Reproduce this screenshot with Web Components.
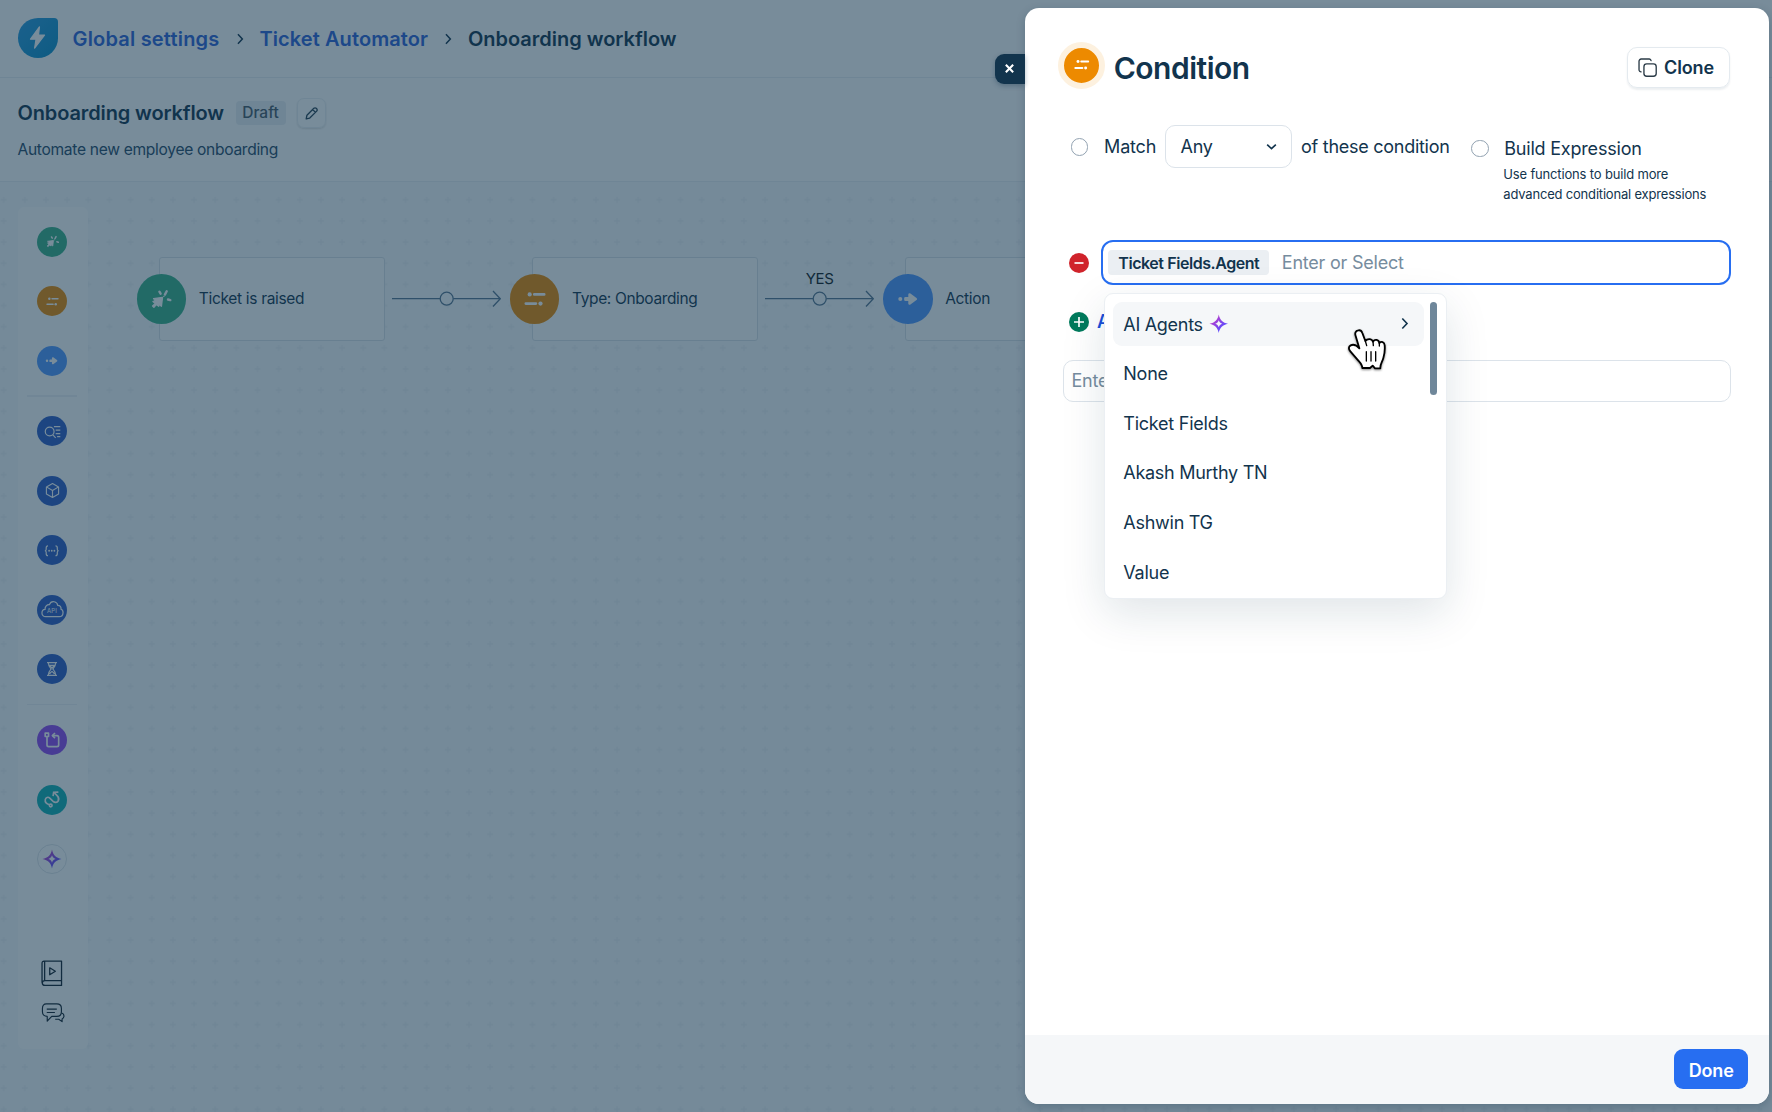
<!DOCTYPE html>
<html lang="en">
<head>
<meta charset="utf-8">
<title>Onboarding workflow</title>
<style>
html,body{margin:0;height:100%;overflow:hidden}
body{font-family:Inter,"Liberation Sans",sans-serif;color:#12344d;background:#fff}
</style>
</head>
<body>
<workflow-app></workflow-app>
<script>
const define=(name,html,setup)=>{
  const t=document.createElement('template');t.innerHTML=html;
  customElements.define(name,class extends HTMLElement{
    constructor(){super();this.attachShadow({mode:'open'}).append(t.content.cloneNode(true));}
    connectedCallback(){if(setup)setup.call(this,this.shadowRoot);}
  });
};
const spark='<path d="M12 .6C13.3 7.200 16.800 10.700 23.400 12C16.800 13.300 13.300 16.800 12 23.400C10.700 16.800 7.200 13.300 .6 12C7.200 10.700 10.700 7.200 12 .6Z M12 7.600C11.200 10 10 11.200 7.600 12C10 12.800 11.200 14 12 16.400C12.800 14 14 12.800 16.400 12C14 11.200 12.800 10 12 7.600Z" fill="url(#g)" fill-rule="evenodd"/>';
const ICONS={
 bolt:'<path fill="#fff" d="M13.6 3.2 6.2 13.4h4.6L9.6 20.8 17.8 10h-5z" stroke="#fff" stroke-width="1" stroke-linejoin="round"/>',
 right:'<path d="M8.5 4l7.500 8-7.500 8" fill="none" stroke="currentColor" stroke-width="2.600"/>',
 down:'<path d="M4 8.5l8 7.5 8-7.5" fill="none" stroke="currentColor" stroke-width="3"/>',
 pencil:'<path d="M3.5 20.5l1.2-5.7L15.8 3.7a2.6 2.6 0 0 1 3.7 0l.8.8a2.6 2.6 0 0 1 0 3.7L9.2 19.3z M14 5.8l4.2 4.2" fill="none" stroke="currentColor" stroke-width="2.1" stroke-linejoin="round"/>',
 burst:'<g stroke="#fff" stroke-linecap="round" stroke-linejoin="round"><path d="M4.6 11.6 13.5 10.4 12.4 19.2 9.9 16.9 9.7 19.2 7.3 17.5 4.9 20.2 3.6 19 6.3 16.4 4 14.4 6.7 14z" fill="#fff" stroke-width="1.4"/><path d="M10.4 4.7l1.2 2M17.7 4.2l-1.8 3.4M19 12.5l2.3.6" fill="none" stroke-width="2.4"/><path d="M12.6 11.4h.1M14.8 9.4h.1" stroke-width="1.4"/></g>',
 cond:'<g fill="none" stroke="#fff" stroke-width="3" stroke-linecap="round"><path d="M11.2 7H22M2 17h11"/></g><circle cx="6.2" cy="7" r="2.3" fill="#fff"/><circle cx="18" cy="17" r="2.3" fill="#fff"/>',
 action:'<circle cx="3.6" cy="12" r="2.2" fill="#fff"/><path d="M9.3 11.300h4.500V7.200L20.400 12l-6.600 4.800v-4.100H9.300z" fill="#fff" stroke="#fff" stroke-width="3" stroke-linejoin="round"/>',
 lookup:'<g fill="none" stroke="#fff" stroke-width="1.7"><circle cx="8" cy="12" r="6.2"/><path d="M12.5 16.7l4 4.3M14 5h9M16.5 10.1H23M16.5 15.1H23M18.5 19.2H23"/></g>',
 cube:'<path d="M12 2.1l8.6 4.8v10.2L12 21.9l-8.6-4.8V6.9zM3.4 6.9 12 12l8.6-5.1M12 12v9.9" fill="none" stroke="#fff" stroke-width="1.6" stroke-linejoin="round"/>',
 braces:'<path d="M6.2 4.5c-2.4 0-2.8 1-2.8 3V9.5c0 1.6-.6 2.3-2 2.5 1.4.2 2 .9 2 2.500v2c0 2 .4 3 2.800 3M17.800 4.500c2.400 0 2.800 1 2.800 3V9.500c0 1.600.6 2.300 2 2.500-1.400.2-2 .9-2 2.500v2c0 2-.4 3-2.800 3" fill="none" stroke="#fff" stroke-width="1.9"/><g fill="#fff"><circle cx="7.900" cy="12" r="1.400"/><circle cx="12" cy="12" r="1.400"/><circle cx="16.100" cy="12" r="1.400"/></g>',
 cloud:'<path d="M5 19.500C2.500 19.500 1 17.800 1 15.600c0-2 1.500-3.600 3.200-3.700-.2-3 2-5.200 4.600-5 .9-2.400 3-3.400 5-3 2 .4 3.400 1.900 3.700 3.800 2.200-.1 3.700 1.600 3.400 4 1.400.5 2.200 1.900 2.100 3.600-.1 2.400-1.700 4.200-4 4.200z" fill="none" stroke="#fff" stroke-width="1.300"/>',
 glass:'<path d="M4.500 2.500h15M4.500 21.500h15M6.500 2.700c0 5 1.500 6.300 4.200 9.300-2.700 3-4.200 4.300-4.200 9.300M17.500 2.700c0 5-1.500 6.300-4.200 9.300 2.700 3 4.200 4.300 4.200 9.300M8.300 6.500h7.400L12 10.500zM8.500 19.500c.5-2 2-2.700 3.500-3.700 1.500 1 3 1.700 3.500 3.700" fill="none" stroke="#fff" stroke-width="1.700"/>',
 loop:'<g fill="none" stroke="#fff" stroke-width="2.500" stroke-linejoin="round"><path d="M1.800 1.800h5v5h-5zM4.500 7v12.500a2.500 2.500 0 0 0 2.500 2.500h12.500a2.500 2.500 0 0 0 2.500-2.500V8a2.500 2.500 0 0 0-2.500-2.500H13"/><path d="M16.500 1.500 12.500 5.300l4 3.800"/></g>',
 route:'<g fill="none" stroke="#fff" stroke-width="2.300"><circle cx="9.500" cy="20.500" r="1.900"/><path d="M7.800 19.300C3.200 18 1.200 15.500 1.800 12.200c.6-3.200 4-4.300 6.300-2.200l4.800 4.600c2.400 2.200 5.700 1.800 7.100-.5 1.600-2.700.6-5.500-1.500-7.600L15 3.100M12.800 7.300l.8-5.500 6.700-.3"/></g>',
 spark,
 book:'<path d="M4.600 1h16.200v22.500H5.500c-3.300 0-3.300-4.500 0-4.500H20.800M4.600 1C3.500 1 2.800 1.800 2.800 3v18M5.200 1v18M9.900 7.200l5.200 3.200-5.200 3.200z" fill="none" stroke="currentColor" stroke-width="1.200" stroke-linejoin="round"/>',
 chat:'<g fill="none" stroke="currentColor" stroke-width="1.200" stroke-linejoin="round"><path d="M5.500 2h11c3 0 4.800 2 4.800 4.700v3.400c0 3-1.900 4.900-4.800 4.900h-5.300l-4.700 5v-5c-3.100 0-5-1.900-5-4.900V6.700C1.500 4 3 2 5.500 2zM6 7.500h10.500M6 11h8.500"/><path d="M14.800 18h3.700l3.500 2.500v-2.700c1.400-.8 2.100-1.800 1.900-3.400 0-1.500-.8-2.500-2.500-2.900"/></g>',
 clone:'<g fill="none" stroke="#2b3b47" stroke-width="1.700"><rect x="7.500" y="7.500" width="15.500" height="15.500" rx="3.500"/><path d="M4.500 17.500H4A2.500 2.500 0 0 1 1.300 15V4A2.700 2.700 0 0 1 4 1.300h10A2.500 2.500 0 0 1 16.500 4"/></g>',
 close:'<path d="M4 4l16 16M20 4L4 20" fill="none" stroke="#fff" stroke-width="4.500"/>',
 minus:'<circle cx="12" cy="12" r="12" fill="#d0232b"/><path d="M6.600 12h10.800" stroke="#fff" stroke-width="2"/>',
 plus:'<circle cx="12" cy="12" r="12" fill="#007a5c"/><path d="M6 12h12M12 6v12" stroke="#fff" stroke-width="2"/>'
};
define('ui-icon','<style>:host{display:block;flex:none;line-height:0}svg{display:block;overflow:visible}</style><svg viewBox="0 0 24 24"></svg>',function(r){
  const s=r.querySelector('svg'),z=this.getAttribute('size')||24;
  s.setAttribute('width',z);s.setAttribute('height',z);
  s.innerHTML='<defs><linearGradient id="g" x1="0" y1="0" x2="1" y2="1"><stop offset=".25" stop-color="#b23fcf"/><stop offset=".75" stop-color="#5a4bff"/></linearGradient></defs>'+ICONS[this.getAttribute('name')];
});
/* Text set to a fixed measure: tracking is derived from the natural width. */
define('fit-text','<style>:host{display:block;flex:none;white-space:nowrap}span{display:inline-block}</style><span><slot></slot></span>',function(r){
  const s=r.querySelector('span'),w=+this.getAttribute('w');
  if(!w)return;
  const n=this.textContent.length;
  s.style.letterSpacing=((w-s.getBoundingClientRect().width)/n)+'px';
  this.style.width=w+'px';
});
define('top-bar',`<style>
:host{display:flex;align-items:center;box-sizing:border-box;height:77.500px;padding-left:17.500px;border-bottom:1.500px solid #ebeff3;background:#fff;font-size:20px;font-weight:600;line-height:28px}
.logo{display:grid;place-items:center;width:40.500px;height:40px;background:linear-gradient(135deg,#289be0,#0a8ec8);border-radius:50% 4px 50% 50%;margin-right:14.500px}
.logo ui-icon{margin:0 0 1px 0}
a{color:#2c62d8}.c{color:#12344d;margin:1px 13px 0}
a,b{font-weight:600;padding-top:2px}
</style><div class="logo"><ui-icon name="bolt" size="29"></ui-icon></div>
<a><fit-text w="147">Global settings</fit-text></a><ui-icon class="c" name="right" size="14"></ui-icon>
<a><fit-text w="168.500">Ticket Automator</fit-text></a><ui-icon class="c" name="right" size="14"></ui-icon>
<b><fit-text w="208.500">Onboarding workflow</fit-text></b>`);
define('workflow-title',`<style>
:host{display:block;box-sizing:border-box;height:104px;padding:20.500px 0 0 17.500px;border-bottom:1.500px solid #ebeff3;background:#fff}
.r{display:flex;align-items:center;height:30px}
h1{font-size:20px;line-height:28px;font-weight:600;margin:0 11.500px 0 0}
.d{display:grid;place-items:center;box-sizing:border-box;width:50px;height:24.500px;padding-bottom:1.500px;border-radius:4px;background:#ebeff3;color:#475867;font-size:15.500px;font-weight:500;margin-right:11px}
.e{box-sizing:border-box;display:grid;place-items:center;width:29.500px;height:29.500px;border:1.200px solid #ebeff3;border-radius:7px;box-shadow:0 1px 2px #0002;color:#264052}
p{margin:11.500px 0 0;font-size:15.600px;line-height:20px;color:#264966}
</style><div class="r"><h1><fit-text w="206.500">Onboarding workflow</fit-text></h1><span class="d"><fit-text w="36.500">Draft</fit-text></span><span class="e"><ui-icon name="pencil" size="15"></ui-icon></span></div>
<p><fit-text w="260.500">Automate new employee onboarding</fit-text></p>`);
define('rail-item',`<style>:host{display:grid;place-items:center;width:100%;height:59.500px;flex:none}
.c{box-sizing:border-box;display:grid;place-items:center;width:30px;height:30px;border-radius:50%}.c>*{grid-area:1/1}
fit-text{font-size:6px;line-height:8px;color:#fff;padding-top:2px}</style><div class="c"></div>`,function(r){
  const c=r.querySelector('.c'),n=this.getAttribute('icon');
  c.style.background=this.getAttribute('color')||'#fff';
  if(n==='spark')c.style.border='1.300px solid #dfe5ea';
  c.innerHTML=`<ui-icon name="${n}" size="${this.getAttribute('size')||17}"></ui-icon>`+(n==='cloud'?'<fit-text w="10">API</fit-text>':'');
});
define('tool-rail',`<style>
:host{box-sizing:border-box;display:flex;flex-direction:column;align-items:center;width:70px;height:842px;padding-top:5.300px;padding-right:.8px;background:#fff;border-radius:6px;color:#12202c}
hr{box-sizing:border-box;width:49.500px;height:1.500px;border:0;background:#eff2f5;margin:4.800px 0 5.100px;flex:none}
.b{margin-top:71px}.h{margin-top:16px}
</style>
<rail-item icon="burst" color="#38b088" size="15"></rail-item><rail-item icon="cond" color="#ed8a00" size="13"></rail-item><rail-item icon="action" color="#4f97ff" size="13.500"></rail-item><hr>
<rail-item icon="lookup" color="#2c5cc5"></rail-item><rail-item icon="cube" color="#2c5cc5"></rail-item><rail-item icon="braces" color="#2c5cc5" size="15.500"></rail-item><rail-item icon="cloud" color="#2c5cc5" size="23"></rail-item><rail-item icon="glass" color="#2c5cc5" size="16"></rail-item><hr>
<rail-item icon="loop" color="#8f46f0" size="16"></rail-item><rail-item icon="route" color="#0fb0b4" size="17"></rail-item><rail-item icon="spark" size="20"></rail-item>
<ui-icon class="b" name="book" size="26"></ui-icon><ui-icon class="h" name="chat" size="23"></ui-icon>`);
define('flow-node',`<style>
:host{display:grid;grid-template-columns:248px;align-items:center;height:83.500px;flex:none;width:248px}
.box,.row{grid-area:1/1}
.box{box-sizing:border-box;height:83.500px;margin-left:22px;border:1.300px solid #dbe2e8;border-radius:3px;background:#fff}
.row{display:flex;align-items:center;gap:12.500px;font-size:15.500px;line-height:20px}
.dot{display:grid;place-items:center;width:49.600px;height:49.600px;border-radius:50%;flex:none}
</style><div class="box"></div><div class="row"><span class="dot"></span><slot></slot></div>`,function(r){
  const d=r.querySelector('.dot');d.style.background=this.getAttribute('color');
  d.innerHTML=`<ui-icon name="${this.getAttribute('icon')}" size="${this.getAttribute('size')}"></ui-icon>`;
});
define('flow-link',`<style>:host{display:grid;place-items:center;width:125.200px;height:83.500px;flex:none;color:#101820;font-size:15px;line-height:20px}
svg,div{grid-area:1/1}div{padding-bottom:39px;padding-right:1.500px}</style>
<svg width="125.200" height="83.500" fill="none" stroke="#56748f" stroke-width="1.300"><path d="M7 41.700h48M68.300 41.700H115M108 34l7.300 7.700L108 49.500"/><circle cx="61.700" cy="41.700" r="6.500"/></svg><div><slot></slot></div>`);
define('flow-canvas',`<style>
:host{display:grid;height:931px;background:#f8fafc;overflow:hidden}
svg,main{grid-area:1/1}svg{width:1772px;height:931px}
main{display:flex;padding:25px 0 0 17.500px}
.n{display:flex;padding:50.500px 0 0 49.200px}
</style><svg><defs><pattern id="p" x="-6.900" y="7.200" width="21.150" height="21.150" patternUnits="userSpaceOnUse"><path d="M10.600 7.600v6M7.600 10.600h6" stroke="#edf1f5" stroke-width="1.300"/></pattern></defs><rect width="1772" height="931" fill="url(#p)"/></svg>
<main><tool-rail></tool-rail><div class="n">
<flow-node icon="burst" color="#38b088" size="24"><fit-text w="105.500">Ticket is raised</fit-text></flow-node><flow-link></flow-link>
<flow-node icon="cond" color="#ed8a00" size="22"><fit-text w="125.500">Type: Onboarding</fit-text></flow-node><flow-link><fit-text w="28">YES</fit-text></flow-link>
<flow-node icon="action" color="#4f97ff" size="22"><fit-text w="45">Action</fit-text></flow-node></div></main>`);
define('radio-dot','<style>:host{display:block;box-sizing:border-box;width:17.600px;height:17.600px;border:1.300px solid #92a2b1;border-radius:50%;background:#fff;flex:none}</style>');
define('menu-item',`<style>:host{display:flex;align-items:center;box-sizing:border-box;width:311px;height:44px;padding:0 12.500px 0 10px;margin-bottom:5.600px;border-radius:9px;font-size:18px;line-height:24px;flex:none}
:host([active]){background:#f5f7f9}::slotted(fit-text){padding-top:1.600px}::slotted(ui-icon:last-child){margin-left:auto}</style><slot></slot>`);
define('field-menu',`<style>
:host{display:flex;box-sizing:border-box;width:343px;height:306px;border:1.200px solid #ebeff3;border-radius:9px;background:#fff;box-shadow:0 14px 44px rgba(18,52,77,.13);padding:8px 8.300px}
nav{flex:none}.s{margin-left:6px}.t{width:7.500px;height:93px;border-radius:4px;background:#6f879a;margin-left:5.300px}
.hand{position:absolute;left:240.800px;top:33.500px;filter:drop-shadow(0 1.500px 1px #0007)}
</style><nav><menu-item active><fit-text w="79.500">AI Agents</fit-text><ui-icon class="s" name="spark" size="19.500"></ui-icon><ui-icon name="right" size="15"></ui-icon></menu-item>
<menu-item><fit-text w="44.500">None</fit-text></menu-item><menu-item><fit-text w="104.500">Ticket Fields</fit-text></menu-item><menu-item><fit-text w="144">Akash Murthy TN</fit-text></menu-item><menu-item><fit-text w="89.500">Ashwin TG</fit-text></menu-item><menu-item><fit-text w="46">Value</fit-text></menu-item></nav><div class="t"></div>
<svg class="hand" width="41.700" height="45" viewBox="980 322 125 135"><path d="M1017 332C1008 333 1006 341 1009 349L1020 386C1012 377 1003 373 994 377C987 381 987 388 993 395L1017 423C1024 431 1029 436 1029 445H1052L1060 438L1067 446H1083C1082 433 1089 427 1092 415C1096 402 1097 389 1096 377C1095 366 1086 364 1080 370C1078 359 1066 358 1061 366C1057 356 1044 356 1038 364L1029 340C1027 334 1023 331 1017 332Z" fill="#fff" stroke="#000" stroke-width="5.500" stroke-linejoin="round"/><path d="M1038 364l4 14M1061 366l1 12M1080 370v9M1041 396v28M1055 396v28M1069 396v28" fill="none" stroke="#000" stroke-width="4" stroke-linecap="round"/></svg>`);
define('condition-drawer',`<style>
:host{display:flex;flex-direction:column;width:744.500px;height:1096px;background:#fff;border-radius:14px;box-shadow:0 3px 8px rgba(18,52,77,.25)}
.close{position:absolute;left:-29.500px;top:45.500px;width:29.500px;height:30px;background:#12344d;border-radius:9px 0 0 9px;display:grid;place-items:center;box-shadow:0 2px 5px #12344d55}
header{display:flex;align-items:flex-start;padding:33.500px 39.500px 0 33.700px;height:47px}
.ic{display:grid;place-items:center;box-sizing:border-box;width:47px;height:47px;border:6px solid #fdf1df;background:#ed8a00;border-radius:50%}
h2{margin:6.500px auto 0 8.500px;font-size:30px;line-height:40px;font-weight:600}
.btn{box-sizing:border-box;display:flex;align-items:center;gap:7.500px;width:102.500px;height:41px;margin-top:5px;padding-left:9.500px;border:1.200px solid #e4eaef;border-radius:10px;box-shadow:0 1.500px 2px #12344d14;font-size:18px;font-weight:600}
.m{display:flex;align-items:flex-start;padding:36.500px 0 0 46px;font-size:18px;line-height:42.500px;height:114.500px;box-sizing:border-box}
.m fit-text{padding-top:1px}
.m>radio-dot{margin-top:13px}
.sel{display:flex;align-items:center;justify-content:space-between;box-sizing:border-box;width:127.500px;height:42.500px;border:1.300px solid #dce3ea;border-radius:10px;padding:0 13px 0 15px;margin:0 9px 0 8.500px}
.sel ui-icon{margin-top:1px}
.x{line-height:24px;margin:10.500px 0 0 14px}
.x p{margin:3px 0 0 .6px;font-size:13px;line-height:20px}.x p fit-text{padding:0}.x>fit-text{margin-left:1.500px}
section{flex:1;padding:0 37.500px 0 38.500px}
.row{display:flex;align-items:center}
.in{box-sizing:border-box;display:flex;align-items:center;border-radius:10px;border:1.300px solid #dce3ea;color:#768c9e;font-size:18px;line-height:24px}
.f{width:630px;height:44.500px;border:2.500px solid #276ef1;margin-left:12.300px;padding-left:5px;background:#fff;border-radius:12px}
.chip{display:grid;place-items:center;width:161px;height:24.500px;border-radius:4px;background:#ebeff3;color:#12344d;font-size:16px;font-weight:600;margin-right:12.500px}
.add{margin:27.500px 0;color:#1a4fd8;font-size:18px;font-weight:600;line-height:20px;gap:8px}
.g{width:667.500px;height:42px;padding-left:7.500px}
.wrap{padding-left:6px}
field-menu{position:absolute;left:79.500px;top:284.700px}
footer{display:flex;justify-content:flex-end;align-items:center;box-sizing:border-box;height:69.500px;padding:0 20.800px 0 0;background:#f5f7f9;border-radius:0 0 14px 14px}
.done{display:grid;place-items:center;box-sizing:border-box;width:74px;height:40px;padding-top:1.500px;border-radius:9px;background:#276ef1;color:#fff;font-size:18px;font-weight:600}
</style>
<div class="close"><ui-icon name="close" size="11"></ui-icon></div>
<header><span class="ic"><ui-icon name="cond" size="15.500"></ui-icon></span><h2><fit-text w="136">Condition</fit-text></h2><span class="btn"><ui-icon name="clone" size="19"></ui-icon><fit-text w="50">Clone</fit-text></span></header>
<div class="m"><radio-dot></radio-dot><fit-text w="52" style="margin-left:16px">Match</fit-text><div class="sel"><fit-text w="32">Any</fit-text><ui-icon name="down" size="13"></ui-icon></div><fit-text w="148.500">of these condition</fit-text><radio-dot style="margin:14.500px 0 0 21.500px"></radio-dot>
<div class="x"><fit-text w="137.500">Build Expression</fit-text><p><fit-text w="165">Use functions to build more</fit-text><fit-text w="203">advanced conditional expressions</fit-text></p></div></div>
<section><div class="wrap" style="padding-top:37.200px"><div class="row"><ui-icon name="minus" size="20"></ui-icon><div class="in f"><span class="chip"><fit-text w="141">Ticket Fields.Agent</fit-text></span><fit-text w="122">Enter or Select</fit-text></div></div>
<div class="row add"><ui-icon name="plus" size="20"></ui-icon><span>Add condition</span></div></div>
<div class="in g"><fit-text w="122">Enter or Select</fit-text></div></section>
<footer><span class="done"><fit-text w="45">Done</fit-text></span></footer>
<field-menu></field-menu>`);
define('workflow-app',`<style>
:host{display:block;position:relative;width:1772px;height:1112px;overflow:hidden;background:#fff}
.scrim{position:absolute;inset:0;background:rgba(18,52,77,.57)}
condition-drawer{position:absolute;left:1024.500px;top:8.200px}
</style><top-bar></top-bar><workflow-title></workflow-title><flow-canvas></flow-canvas><div class="scrim"></div><condition-drawer></condition-drawer>`);
</script>
</body>
</html>
